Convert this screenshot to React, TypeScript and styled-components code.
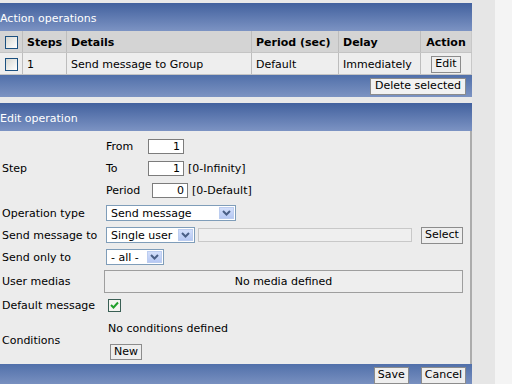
import styled, { createGlobalStyle } from "styled-components";

const GlobalStyle = createGlobalStyle`
  html, body {
    margin: 0;
    padding: 0;
    background: #f3f3f3;
    font-family: "DejaVu Sans", Verdana, sans-serif;
    font-size: 11px;
    color: #000;
  }
`;

const Page = styled.div`
  display: flex;
  width: 512px;
  height: 384px;
  overflow: hidden;
`;

const Main = styled.div`
  width: 472px;
  flex: none;
  padding-top: 3px;
  background: #e9e9e9;
  display: flex;
  flex-direction: column;
  gap: 6px;
`;

const Gutter = styled.div`
  width: 23px;
  flex: none;
  background: #e6e6e6;
`;

const Rest = styled.div`
  flex: 1;
  background: #f4f4f4;
`;

const Section = styled.section`
  display: flex;
  flex-direction: column;
`;

const Header = styled.div`
  height: 28px;
  box-sizing: border-box;
  padding-top: 3px;
  line-height: 26px;
  color: #fff;
  background: linear-gradient(#42619e, #7c93c3);
  white-space: nowrap;
`;

const Bar = styled.div`
  height: 22px;
  display: flex;
  align-items: center;
  justify-content: flex-end;
  gap: 12px;
  padding-right: 6px;
  background: linear-gradient(#5170aa, #7c93c2);
`;

const Row = styled.div<{ $head?: boolean }>`
  display: grid;
  grid-template-columns: 23px 44px 185px 87px 82px 1fr;
  height: 22px;
  background: ${(p) => (p.$head ? "#d4d4d4" : "#eeeeee")};
  font-weight: ${(p) => (p.$head ? "bold" : "normal")};
  border-bottom: 1px solid #c4c4c4;
  box-sizing: border-box;
`;

const Cell = styled.div<{ $center?: boolean }>`
  display: flex;
  align-items: center;
  justify-content: ${(p) => (p.$center ? "center" : "flex-start")};
  padding: 1px 4px 0;
  border-right: 1px solid #bdbdbd;
  white-space: nowrap;
  overflow: hidden;
  &:last-child {
    border-right: 1px solid #c8c8c8;
  }
`;

const Box = styled.span<{ $checked?: boolean }>`
  width: 13px;
  height: 13px;
  box-sizing: border-box;
  border: 1px solid ${(p) => (p.$checked ? "#3a5f55" : "#1c5180")};
  background: ${(p) =>
    p.$checked ? "#f4f4f0" : "linear-gradient(135deg, #d8d8d2, #ffffff)"};
  display: inline-flex;
  align-items: center;
  justify-content: center;
`;

const Button = styled.button`
  font-family: "DejaVu Sans", Verdana, sans-serif;
  font-size: 11px;
  color: #000;
  height: 17px;
  padding: 0 3px;
  background: #eeeeee;
  border: 1px solid #8c8c8c;
  border-radius: 0;
  line-height: 14px;
  white-space: nowrap;
`;

const WideButton = styled(Button)`
  padding: 0 4px;
  background: #f2f2f2;
`;

const FormBody = styled.div`
  background: #ececec;
  border-right: 2px solid #acacac;
  padding-top: 4px;
  height: 229px;
`;

const FormRow = styled.div<{ $h?: number }>`
  display: grid;
  grid-template-columns: 104px 1fr;
  align-items: center;
  min-height: ${(p) => p.$h ?? 22}px;
`;

const Label = styled.div`
  padding-left: 2px;
  white-space: nowrap;
`;

const Value = styled.div`
  display: flex;
  align-items: center;
  padding-left: 2px;
  white-space: nowrap;
`;

const StepGrid = styled.div`
  display: flex;
  flex-direction: column;
  padding: 0 0 1px 2px;
`;

const StepLine = styled.div`
  display: flex;
  align-items: center;
  height: 22px;
`;

const StepLabel = styled.span<{ $w?: number }>`
  width: ${(p) => p.$w ?? 42}px;
`;

const NumInput = styled.input`
  width: 36px;
  height: 15px;
  box-sizing: border-box;
  border: 1px solid #7c7c7c;
  background: #fff;
  text-align: right;
  padding: 0 3px 0 0;
  font-family: "DejaVu Sans", Verdana, sans-serif;
  font-size: 11px;
  margin-right: 4px;
  outline: none;
`;

const Dropdown = styled.div<{ $w: number }>`
  width: ${(p) => p.$w}px;
  height: 16px;
  box-sizing: border-box;
  border: 1px solid #7f9db9;
  background: #fff;
  display: flex;
  align-items: center;
  justify-content: space-between;
  padding: 0 1px 0 4px;
  flex: none;
`;

const ArrowBox = styled.span`
  width: 15px;
  height: 12px;
  box-sizing: border-box;
  background: linear-gradient(#d3dffb, #b6c8f3);
  border: 1px solid #bccdf0;
  display: inline-flex;
  align-items: center;
  justify-content: center;
`;

const DisabledField = styled.div`
  width: 214px;
  height: 14px;
  margin-left: 3px;
  box-sizing: border-box;
  border: 1px solid #c8c8c8;
  background: #efefef;
  margin-right: 9px;
`;

const MediaBox = styled.div`
  width: 359px;
  height: 23px;
  box-sizing: border-box;
  border: 1px solid #9e9e9e;
  background: #eeeeee;
  display: flex;
  align-items: center;
  justify-content: center;
`;

const CheckSlot = styled.div`
  padding-left: 4px;
  display: flex;
  align-items: center;
`;

const CondCell = styled.div`
  display: flex;
  flex-direction: column;
  align-items: flex-start;
  gap: 8px;
  padding: 6px 0 4px 4px;
  line-height: 14px;
`;

const NewButton = styled(Button)`
  margin-left: 2px;
  height: 16px;
`;

function Arrow() {
  return (
    <ArrowBox>
      <svg width="9" height="6" viewBox="0 0 9 6">
        <path d="M1 1 L4.5 4.5 L8 1" stroke="#4a5f86" strokeWidth="2" fill="none" />
      </svg>
    </ArrowBox>
  );
}

function Select({ label, width }: { label: string; width: number }) {
  return (
    <Dropdown $w={width}>
      <span>{label}</span>
      <Arrow />
    </Dropdown>
  );
}

export default function App() {
  return (
    <Page>
      <GlobalStyle />
      <Main>
        <Section>
          <Header>Action operations</Header>
          <Row $head>
            <Cell $center>
              <Box />
            </Cell>
            <Cell>Steps</Cell>
            <Cell>Details</Cell>
            <Cell>Period (sec)</Cell>
            <Cell>Delay</Cell>
            <Cell $center>Action</Cell>
          </Row>
          <Row>
            <Cell $center>
              <Box />
            </Cell>
            <Cell>1</Cell>
            <Cell>Send message to Group</Cell>
            <Cell>Default</Cell>
            <Cell>Immediately</Cell>
            <Cell $center>
              <Button>Edit</Button>
            </Cell>
          </Row>
          <Bar>
            <WideButton>Delete selected</WideButton>
          </Bar>
        </Section>

        <Section>
          <Header>Edit operation</Header>
          <FormBody>
            <FormRow>
              <Label>Step</Label>
              <StepGrid>
                <StepLine>
                  <StepLabel>From</StepLabel>
                  <NumInput value="1" readOnly />
                </StepLine>
                <StepLine>
                  <StepLabel>To</StepLabel>
                  <NumInput value="1" readOnly />
                  [0-Infinity]
                </StepLine>
                <StepLine>
                  <StepLabel $w={46}>Period</StepLabel>
                  <NumInput value="0" readOnly />
                  [0-Default]
                </StepLine>
              </StepGrid>
            </FormRow>
            <FormRow>
              <Label>Operation type</Label>
              <Value>
                <Select label="Send message" width={130} />
              </Value>
            </FormRow>
            <FormRow>
              <Label>Send message to</Label>
              <Value>
                <Select label="Single user" width={89} />
                <DisabledField />
                <Button>Select</Button>
              </Value>
            </FormRow>
            <FormRow>
              <Label>Send only to</Label>
              <Value>
                <Select label="- all -" width={58} />
              </Value>
            </FormRow>
            <FormRow $h={26}>
              <Label>User medias</Label>
              <MediaBox>No media defined</MediaBox>
            </FormRow>
            <FormRow>
              <Label>Default message</Label>
              <CheckSlot>
                <Box $checked>
                  <svg width="9" height="8" viewBox="0 0 9 8">
                    <path d="M1 4 L3.5 6.5 L8 1.5" stroke="#22a02a" strokeWidth="2" fill="none" />
                  </svg>
                </Box>
              </CheckSlot>
            </FormRow>
            <FormRow $h={48}>
              <Label>Conditions</Label>
              <CondCell>
                <span>No conditions defined</span>
                <NewButton>New</NewButton>
              </CondCell>
            </FormRow>
          </FormBody>
          <Bar>
            <Button>Save</Button>
            <Button>Cancel</Button>
          </Bar>
        </Section>
      </Main>
      <Gutter />
      <Rest />
    </Page>
  );
}
